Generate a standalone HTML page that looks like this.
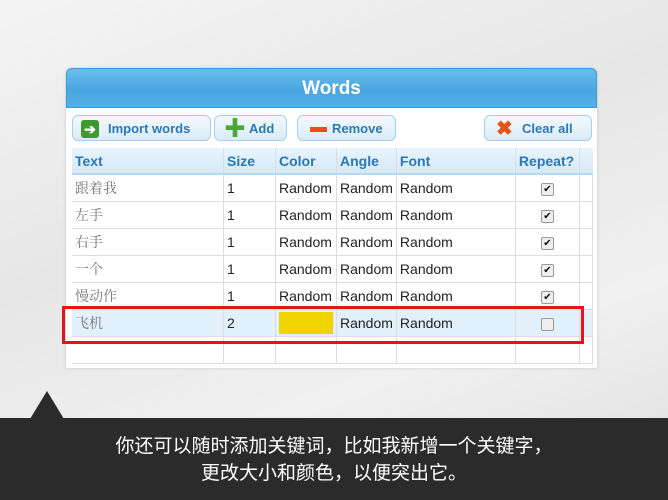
<!DOCTYPE html>
<html><head><meta charset="utf-8"><style>
body{margin:0;width:668px;height:500px;position:relative;overflow:hidden;background:linear-gradient(160deg,#f4f4f4 0%,#e6e6e6 40%,#f0f0f0 70%,#dedede 100%);font-family:"Liberation Sans","Noto Sans CJK SC",sans-serif}
.panel{position:absolute;left:66px;top:68px;width:531px;height:300px;background:#fff;border-radius:6px 6px 0 0;box-shadow:0 0 3px rgba(0,0,0,.15)}
.hdr{height:40px;border-radius:6px 6px 0 0;background:linear-gradient(#6cbdec,#4aa6e0 55%,#56b0e6);border:1px solid #3a9ad8;box-sizing:border-box;color:#fff;font-weight:bold;font-size:19px;text-align:center;line-height:40px}
.btn{position:absolute;top:47px;height:26px;border:1px solid #a9cfe9;border-radius:6px;background:linear-gradient(#f3f9fd,#d9ecf8);color:#2a78b5;font-weight:bold;font-size:13px;line-height:26px;box-sizing:border-box}
.btn span{position:absolute}
table{position:absolute;left:6px;top:80px;border-collapse:collapse;font-size:14px}
td,th{height:26px;padding:0 3px;border-right:1px solid #ddd;border-bottom:1px solid #ddd;text-align:left}
th{background:linear-gradient(#e9f4fc,#d3e9f8);color:#2a78b5;font-size:14px;height:25px;border-bottom:2px solid #b9daf0}
td{color:#222}
td.z{color:#777;font-family:"Noto Serif CJK SC",serif}
.cb{display:inline-block;width:11px;height:11px;border:1px solid #999;border-radius:2px;background:#eee;font-size:10px;line-height:11px;text-align:center;color:#111;vertical-align:middle}
tr.sel td{background:#e1f0fb}
.red{position:absolute;left:62px;top:306px;width:516px;height:32px;border:3px solid #e8121a}
.bar{position:absolute;left:0;top:418px;width:668px;height:82px;background:#2b2b2b;color:#fff;text-align:center;font-size:19px;line-height:27px;padding-top:15px;box-sizing:border-box}
.tri{position:absolute;left:30px;top:391px;width:0;height:0;border-left:17px solid transparent;border-right:17px solid transparent;border-bottom:28px solid #2b2b2b}
</style></head><body>
<div class="panel">
<div class="hdr">Words</div>
<div class="btn" style="left:6px;width:139px"><span style="left:8px;top:4px;width:18px;height:18px;background:#3f9a2e;border-radius:3px;color:#fff;line-height:18px;text-align:center;font-size:14px">➔</span><span style="left:35px">Import words</span></div>
<div class="btn" style="left:148px;width:73px"><span style="left:9px;top:0;color:#4aa83a;font-size:22px">✚</span><span style="left:34px">Add</span></div>
<div class="btn" style="left:231px;width:99px"><span style="left:12px;top:11px;width:17px;height:5px;background:#e0521c"></span><span style="left:34px">Remove</span></div>
<div class="btn" style="left:418px;width:108px"><span style="left:11px;top:0;color:#e4541c;font-size:20px">✖</span><span style="left:37px">Clear all</span></div>
<table>
<tr><th style="width:145px">Text</th><th style="width:45px">Size</th><th style="width:53px">Color</th><th style="width:52px">Angle</th><th style="width:112px">Font</th><th style="width:57px">Repeat?</th><th style="width:7px;border-right:none"></th></tr>
<tr><td class="z">跟着我</td><td>1</td><td>Random</td><td>Random</td><td>Random</td><td style="text-align:center"><span class="cb">✔</span></td><td></td></tr>
<tr><td class="z">左手</td><td>1</td><td>Random</td><td>Random</td><td>Random</td><td style="text-align:center"><span class="cb">✔</span></td><td></td></tr>
<tr><td class="z">右手</td><td>1</td><td>Random</td><td>Random</td><td>Random</td><td style="text-align:center"><span class="cb">✔</span></td><td></td></tr>
<tr><td class="z">一个</td><td>1</td><td>Random</td><td>Random</td><td>Random</td><td style="text-align:center"><span class="cb">✔</span></td><td></td></tr>
<tr><td class="z">慢动作</td><td>1</td><td>Random</td><td>Random</td><td>Random</td><td style="text-align:center"><span class="cb">✔</span></td><td></td></tr>
<tr class="sel"><td class="z">飞机</td><td>2</td><td><div style="width:54px;height:22px;background:#f0d400"></div></td><td>Random</td><td>Random</td><td style="text-align:center"><span class="cb"></span></td><td></td></tr>
<tr><td></td><td></td><td></td><td></td><td></td><td></td><td></td></tr>
</table>
</div>
<div class="red"></div>
<div class="tri"></div>
<div class="bar">你还可以随时添加关键词，比如我新增一个关键字，<br>更改大小和颜色，以便突出它。</div>
</body></html>
